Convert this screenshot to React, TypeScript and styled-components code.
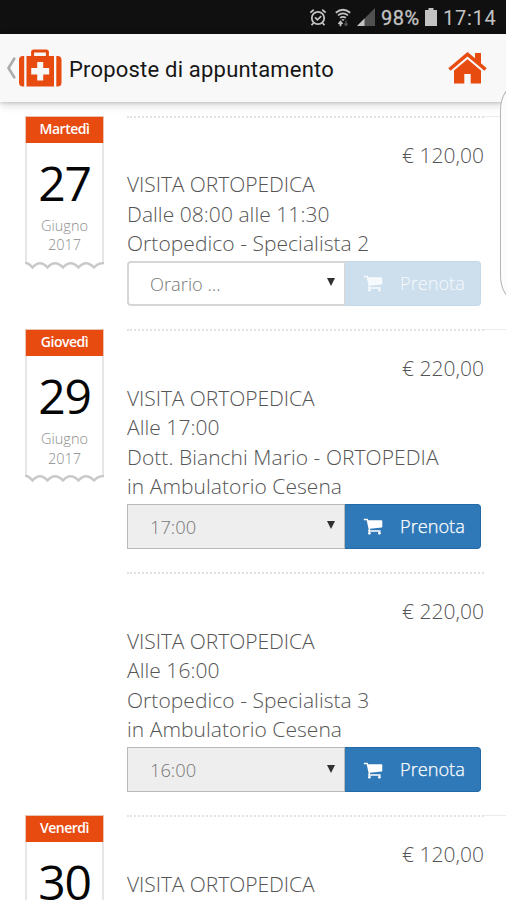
import React from "react";
import styled, { createGlobalStyle } from "styled-components";

const GlobalStyle = createGlobalStyle`
  * { box-sizing: border-box; }
  html, body { margin: 0; padding: 0; }
  body { background: #fff; overflow: hidden; font-family: "Open Sans", "Noto Sans", sans-serif; }
`;

const Screen = styled.div`
  position: relative;
  width: 506px;
  height: 900px;
  overflow: hidden;
  display: flex;
  flex-direction: column;
  background: #fff;
`;

const StatusBar = styled.div`
  flex: none;
  height: 34px;
  background: #101010;
  color: #c3c3c3;
  display: flex;
  align-items: center;
  justify-content: flex-end;
  padding-right: 10px;
  font: 400 20px/34px Roboto, sans-serif;

  svg { display: block; flex: none; }
`;

const Percent = styled.span`
  margin: 2px 4px 0 6px;
  width: 40px;
  letter-spacing: 0.5px;
  -webkit-text-stroke: 0.3px currentColor;
  white-space: nowrap;
`;

const Clock = styled.span`
  margin: 2px 0 0 6px;
  width: 53px;
  letter-spacing: 0.75px;
  white-space: nowrap;
`;

const Gap = styled.i<{ $w: number }>`
  flex: none;
  width: ${(p) => p.$w}px;
`;

const Header = styled.header`
  flex: none;
  position: relative;
  z-index: 1;
  height: 68px;
  background: #f8f8f8;
  box-shadow: 0 1px 3px rgba(0, 0, 0, 0.14), 0 3px 9px rgba(0, 0, 0, 0.16);
  display: flex;
  align-items: center;
  padding: 0 19px 0 6px;

  svg { display: block; flex: none; }
`;

const Title = styled.h1`
  flex: 1;
  margin: 3px 0 0 7px;
  color: #161616;
  font: 400 22px/30px Roboto, sans-serif;
  letter-spacing: 0.2px;
  white-space: nowrap;
`;

const List = styled.main`
  flex: 1;
  min-height: 0;
  padding-top: 13.5px;
`;

const Day = styled.section`
  display: flex;
  align-items: flex-start;
  padding-left: 25px;
`;

const Ticket = styled.div`
  flex: none;
  width: 79px;
  margin-right: 23px;
  text-align: center;
`;

const Weekday = styled.div`
  height: 27px;
  border: 1px solid #ecc3b3;
  border-bottom: 0;
  background: #e84b10;
  color: #fff;
  font-size: 14px;
  font-weight: 600;
  line-height: 23px;
  letter-spacing: -0.5px;
`;

const TicketBody = styled.div`
  height: 119px;
  border: solid #e6e6e6;
  border-width: 0 2px;
  padding-top: 10px;
`;

const DayNumber = styled.div`
  color: #050505;
  font-size: 48px;
  line-height: 60px;
  letter-spacing: -1.2px;
`;

const MonthYear = styled.div`
  margin-top: 3px;
  color: #8c8c8c;
  font-size: 14.5px;
  font-weight: 300;
  line-height: 19.5px;
`;

const TornEdge = styled.svg`
  display: block;
`;

const Slots = styled.div`
  flex: 1;
`;

const Slot = styled.article<{ $first: boolean }>`
  width: 357px;
  padding: 23px 0 22.9px;
  position: relative;
  border-top: 2px dotted #e2e2e2;
  color: #555;
  font-size: 21px;
  font-weight: 300;
  line-height: 29.5px;

  &::after {
    content: "";
    display: ${(p) => (p.$first ? "block" : "none")};
    position: absolute;
    left: 357px;
    top: -2px;
    width: 22px;
    height: 1px;
    background: #ebebeb;
  }
`;

const Price = styled.div`
  text-align: right;
`;

const Service = styled.div`
  letter-spacing: -0.06px;
  white-space: nowrap;
`;

const Detail = styled.div`
  letter-spacing: 0.05px;
  white-space: nowrap;
`;

const Booking = styled.div`
  display: flex;
  width: 354px;
  height: 45.7px;
  margin-top: 2px;
`;

const Select = styled.div<{ $filled: boolean }>`
  width: 218px;
  border: ${(p) => (p.$filled ? "1px solid #b9b9b9" : "2px solid #d6d6d6")};
  border-right-width: 1px;
  border-radius: ${(p) => (p.$filled ? "0" : "4px 0 0 4px")};
  background: ${(p) => (p.$filled ? "#eee" : "#fff")};
  color: #777;
  display: flex;
  align-items: center;
  justify-content: space-between;
  padding: ${(p) => (p.$filled ? "0 9px 0 22px" : "0 9px 0 21px")};
  font-size: 18.3px;

  svg { margin-top: -2px; }
`;

const BookButton = styled.button<{ $disabled: boolean }>`
  flex: 1;
  border: 1px solid ${(p) => (p.$disabled ? "#c5d9e9" : "#2369a6")};
  border-left-width: 0;
  border-radius: 0 4px 4px 0;
  background: ${(p) => (p.$disabled ? "#cddeec" : "#3079b8")};
  color: ${(p) => (p.$disabled ? "#f6fafd" : "#fff")};
  display: flex;
  align-items: center;
  padding: 0 0 0 18px;
  font-family: inherit;
  font-size: 18.2px;
  line-height: 28px;

  span {
    margin: -1px 0 0 17px;
    font-weight: 300;
    -webkit-text-stroke: ${(p) => (p.$disabled ? "0" : "0.25px")} currentColor;
  }
`;

const EdgeHandle = styled.div`
  position: absolute;
  z-index: 2;
  left: 500px;
  top: 86px;
  width: 30px;
  height: 214px;
  border: 1px solid #b5b5b5;
  border-radius: 15px / 24px;
  background: #fcfcfc;
`;

const AlarmIcon = () => (
  <svg width="18" height="19" viewBox="0 0 18 19" fill="none" stroke="#c3c3c3" strokeWidth="1.8">
    <circle cx="9" cy="10" r="6.2" />
    <path d="M1.3 4.6 4.8 1.8M16.7 4.6 13.2 1.8M4.5 15l-2 2.2M13.5 15l2 2.2M6 9.4l2.4 2.4 3.8-3.6" />
  </svg>
);

const WifiIcon = () => (
  <svg width="16" height="19" viewBox="0 0 16 19" fill="none" stroke="#c3c3c3" strokeWidth="1.8">
    <path d="M.8 4.7Q8-1.1 15.2 4.7M3 7.4q5-4 10 0M5.1 9.9q2.9-2.2 5.8 0" />
    <path d="M6.3 11.2h3.4L8 13.2z" fill="#c3c3c3" stroke="none" />
    <path d="M5.5 18.2v-4M3.5 16l2-2.400 2 2.400" strokeWidth="1.7" />
    <path d="M11 12.5v5M9.3 15.5l1.7 2 1.7-2" stroke="#555" strokeWidth="1.3" />
  </svg>
);

const SignalIcon = () => (
  <svg width="18" height="18" viewBox="0 0 18 18">
    <path d="M18 0v18H0z" fill="#505050" />
    <path d="M7.5 10.5V18H0z" fill="#c3c3c3" />
  </svg>
);

const BatteryIcon = () => (
  <svg width="12" height="18" viewBox="0 0 12 18" fill="#c3c3c3">
    <path d="M3.5 0h5v2H12v16H0V2h3.5z" />
  </svg>
);

const BackIcon = () => (
  <svg width="11" height="22" viewBox="0 0 11 22" fill="none" stroke="#aaa" strokeWidth="2.6">
    <path d="M9.3 1.4Q7.6 1.7 6.9 4L2.5 11l4.4 7q.7 2.3 2.4 2.6" />
  </svg>
);

const MedkitIcon = () => (
  <svg width="45" height="38" viewBox="-.5 0 45 38" fill="#e84b10">
    <path d="M6.7 7v30.500H5.500q-4 0-4-4V11q0-4 4-4zM38.800 7H40q4 0 4 4v22.500q0 4-4 4h-1.200z" />
    <path
      fillRule="evenodd"
      d="M9 7h4.600V3q0-2.500 2.500-2.500h12.800q2.500 0 2.500 2.500v4H36.500v30.500H9zM16.600 3.500V7h11.800V3.500zM19.700 13v6h-6v6.500h6v6h6v-6h6V19h-6v-6z"
    />
  </svg>
);

const HomeIcon = () => (
  <svg width="39" height="32" viewBox="0 0 39 32" fill="#e84b10">
    <path d="M19.500 0 27 6.200V1h6v10.300l5.700 4.900-2.300 2.600L19.500 4.400 2.600 18.800.3 16.200z" />
    <path d="M19.500 7.200 33 18.600V31.500H22.700V22h-6.400v9.500H6V18.600z" />
  </svg>
);

const CartIcon = () => (
  <svg width="20" height="20" viewBox="0 0 1792 1792" fill="currentColor">
    <path d="M704 1536q0 52-38 90t-90 38-90-38-38-90 38-90 90-38 90 38 38 90zm896 0q0 52-38 90t-90 38-90-38-38-90 38-90 90-38 90 38 38 90zm128-1088v512q0 24-16.500 42.500t-40.500 21.500l-1044 122q13 60 13 70 0 16-24 64h920q26 0 45 19t19 45-19 45-45 19h-1024q-26 0-45-19t-19-45q0-11 8-31.500t16-36 21.500-40 15.500-29.500l-177-823h-204q-26 0-45-19t-19-45 19-45 45-19h256q16 0 28.500 6.500t19.500 15.500 13 24.500 8 26 5.500 29.500 4.500 26h1201q26 0 45 19t19 45z" />
  </svg>
);

const Caret = () => (
  <svg width="8" height="8" viewBox="0 0 8 8" fill="#303030">
    <path d="M0 0h8L4 8z" />
  </svg>
);

type SlotData = { price: string; service: string; details: string[]; time: string; open?: boolean };
type DayData = { weekday: string; day: string; slots: SlotData[] };

const days: DayData[] = [
  {
    weekday: "Martedì",
    day: "27",
    slots: [
      {
        price: "€ 120,00",
        service: "VISITA ORTOPEDICA",
        details: ["Dalle 08:00 alle 11:30", "Ortopedico - Specialista 2"],
        time: "Orario ...",
        open: true,
      },
    ],
  },
  {
    weekday: "Giovedì",
    day: "29",
    slots: [
      {
        price: "€ 220,00",
        service: "VISITA ORTOPEDICA",
        details: ["Alle 17:00", "Dott. Bianchi Mario - ORTOPEDIA", "in Ambulatorio Cesena"],
        time: "17:00",
      },
      {
        price: "€ 220,00",
        service: "VISITA ORTOPEDICA",
        details: ["Alle 16:00", "Ortopedico - Specialista 3", "in Ambulatorio Cesena"],
        time: "16:00",
      },
    ],
  },
  {
    weekday: "Venerdì",
    day: "30",
    slots: [{ price: "€ 120,00", service: "VISITA ORTOPEDICA", details: [], time: "Orario ...", open: true }],
  },
];

const DateTicket = ({ weekday, day }: { weekday: string; day: string }) => (
  <Ticket>
    <Weekday>{weekday}</Weekday>
    <TicketBody>
      <DayNumber>{day}</DayNumber>
      <MonthYear>
        Giugno
        <br />
        2017
      </MonthYear>
    </TicketBody>
    <TornEdge width="79" height="8" viewBox="0 0 79 8" fill="none" stroke="#c9c9c9" strokeWidth="2.4">
      <path d="M0 .5Q4 1 7.500 5.500 15-3 22.500 5.500 30-3 38 5.500 45.500-3 53.500 5.500 61-3 69 5.500 73 1 79 1" />
    </TornEdge>
  </Ticket>
);

const Appointment = ({ slot, first }: { slot: SlotData; first: boolean }) => (
  <Slot $first={first}>
    <Price>{slot.price}</Price>
    <Service>{slot.service}</Service>
    {slot.details.map((text) => (
      <Detail key={text}>{text}</Detail>
    ))}
    <Booking>
      <Select $filled={!slot.open}>
        {slot.time}
        <Caret />
      </Select>
      <BookButton $disabled={!!slot.open}>
        <CartIcon />
        <span>Prenota</span>
      </BookButton>
    </Booking>
  </Slot>
);

export default function App() {
  return (
    <Screen>
      <GlobalStyle />
      <StatusBar>
        <AlarmIcon />
        <Gap $w={8} />
        <WifiIcon />
        <Gap $w={6} />
        <SignalIcon />
        <Percent>98%</Percent>
        <BatteryIcon />
        <Clock>17:14</Clock>
      </StatusBar>
      <Header>
        <BackIcon />
        <MedkitIcon />
        <Title>Proposte di appuntamento</Title>
        <HomeIcon />
      </Header>
      <List>
        {days.map((d) => (
          <Day key={d.day}>
            <DateTicket weekday={d.weekday} day={d.day} />
            <Slots>
              {d.slots.map((s, i) => (
                <Appointment key={s.time} slot={s} first={i === 0} />
              ))}
            </Slots>
          </Day>
        ))}
      </List>
      <EdgeHandle />
    </Screen>
  );
}
